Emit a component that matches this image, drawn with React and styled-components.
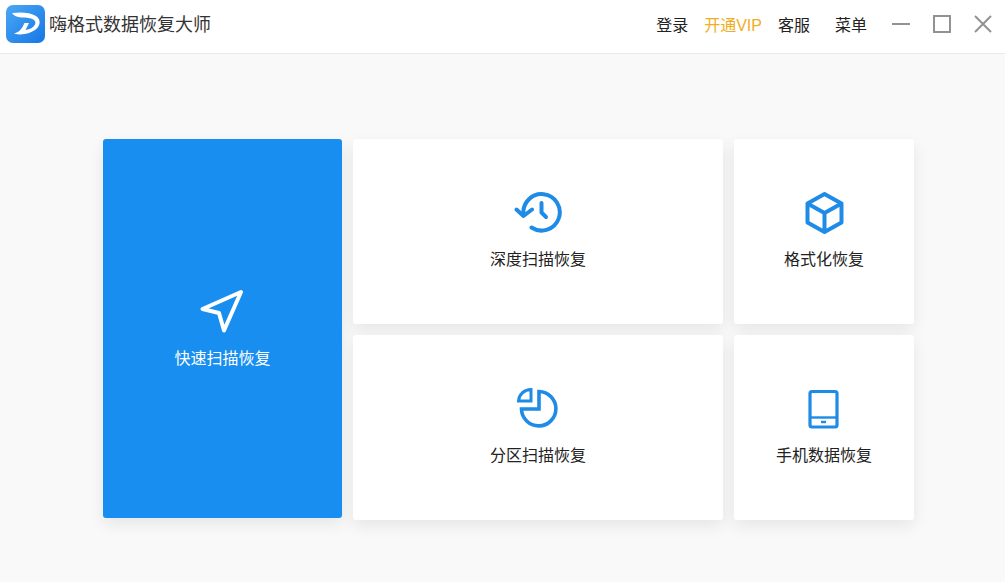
import React from 'react';
import styled, { createGlobalStyle } from 'styled-components';

const GlobalStyle = createGlobalStyle`
  * {
    box-sizing: border-box;
  }

  body {
    margin: 0;
    background-color: #f9f9f9;
    color: #222;
    font-family: 'Liberation Sans', 'Noto Sans CJK SC', sans-serif;
    font-size: 16px;
    line-height: 24px;
  }

  button {
    border: 0;
    background: none;
    padding: 0;
    color: inherit;
    font: inherit;
    cursor: pointer;
  }
`;

const Page = styled.div`
  display: flex;
  flex-direction: column;
  min-height: 100vh;
`;

const TitleBar = styled.header`
  display: flex;
  align-items: center;
  justify-content: space-between;
  padding: 5px 13px 10px 6px;
  background-color: #fff;
  border-bottom: 1px solid #e9e9e9;
`;

const Brand = styled.div`
  display: flex;
  align-items: center;
  gap: 4px;
`;

const BrandName = styled.h1`
  margin: 0;
  padding-top: 2px;
  color: #333;
  font-size: 18px;
  font-weight: 400;
  line-height: 24px;
`;

const Actions = styled.div`
  display: flex;
  align-items: center;
  gap: 25px;
`;

const Menu = styled.nav`
  display: flex;
  gap: 16px;
`;

const MenuLink = styled.a`
  padding-top: 4px;
  color: ${({ $vip }) => ($vip ? '#f0ae22' : '#222')};
  text-decoration: none;
`;

const WindowControls = styled.div`
  display: flex;
  gap: 23px;
`;

const WindowButton = styled.button`
  display: flex;
`;

const Main = styled.main`
  flex: 1;
  padding: 85px 91px 62px 103px;
`;

const CardGrid = styled.div`
  display: grid;
  grid-template-columns: 239fr 370fr 180fr;
  grid-auto-rows: minmax(185px, auto);
  gap: 11px;
`;

const Card = styled.button`
  display: flex;
  flex-direction: column;
  align-items: center;
  justify-content: center;
  gap: 12px;
  grid-row: ${({ $featured }) => ($featured ? 'span 2' : 'auto')};
  margin-bottom: ${({ $featured }) => ($featured ? '2px' : '0')};
  padding-bottom: ${({ $featured }) => ($featured ? '0' : '4px')};
  border-radius: 3px;
  background-color: ${({ $featured }) => ($featured ? '#188ef0' : '#fff')};
  box-shadow: 0 6px 16px rgba(0, 0, 0, 0.08);
  color: ${({ $featured }) => ($featured ? '#fff' : '#222')};

  svg {
    color: ${({ $featured }) => ($featured ? '#fff' : '#1e8be6')};
  }
`;

const CardIcon = ({ children }) => (
  <svg
    width="48"
    height="48"
    viewBox="0 0 48 48"
    fill="none"
    stroke="currentColor"
    strokeWidth="4"
    strokeLinejoin="round"
    aria-hidden="true"
  >
    {children}
  </svg>
);

const Logo = () => (
  <svg width="39" height="38" viewBox="0 0 39 38" aria-hidden="true">
    <defs>
      <linearGradient id="logoFill" x1="0" y1="0" x2="1" y2="1">
        <stop offset="0" stopColor="#4ba7f4" />
        <stop offset="1" stopColor="#1577e6" />
      </linearGradient>
    </defs>
    <rect width="39" height="38" rx="7" fill="url(#logoFill)" />
    <path
      d="M6 8C14 7 24 7 30 11C35.500 15 34.500 21 29 25C23.500 29 15 30.500 8 28.500C12 27.500 14.500 25.500 16.500 22L18.500 18H23L19.500 25C24 24.500 27.500 22.500 29 19.500C30.500 16 28 14 23.500 13.200C17 12 9.500 13.500 6 8Z"
      fill="#fff"
    />
  </svg>
);

const cards = [
  {
    label: '快速扫描恢复',
    featured: true,
    icon: <path d="M42 5L3.500 22L20 26L25 43.500Z" />,
  },
  {
    label: '深度扫描恢复',
    icon: (
      <g strokeLinecap="round">
        <path d="M9.500 26.500A18.200 18.200 0 1 1 17.500 39.500" />
        <path d="M2.500 21.500L9.500 28L18 21.500" />
        <path d="M27.500 15V24.500L32 29" />
      </g>
    ),
  },
  {
    label: '格式化恢复',
    icon: <path d="M24.500 6L41.500 15.500V34.500L24.500 44L7.500 34.500V15.500ZM7.500 15.500L24.500 25L41.500 15.500M24.500 25V44" />,
  },
  {
    label: '分区扫描恢复',
    icon: (
      <g strokeWidth="3.600" strokeLinejoin="miter">
        <path d="M25 7.500A17.200 17.200 0 1 1 7.500 25H25Z" />
        <path d="M17 5.500V17H4.500A12.500 12 0 0 1 17 5.500Z" strokeWidth="3" />
      </g>
    ),
  },
  {
    label: '手机数据恢复',
    icon: (
      <g strokeWidth="3.200">
        <rect x="10" y="7.500" width="27" height="35.500" rx="2" />
        <path d="M10 33.500H37" strokeWidth="2.400" />
        <path d="M21 38H26" strokeWidth="2.400" />
      </g>
    ),
  },
];

const App = () => {
  return (
    <Page>
      <GlobalStyle />
      <TitleBar>
        <Brand>
          <Logo />
          <BrandName>嗨格式数据恢复大师</BrandName>
        </Brand>
        <Actions>
          <Menu>
            <MenuLink href="#login">登录</MenuLink>
            <MenuLink href="#vip" $vip>开通VIP</MenuLink>
            <MenuLink href="#service">客服</MenuLink>
          </Menu>
          <MenuLink href="#menu">菜单</MenuLink>
          <WindowControls>
            <WindowButton type="button" aria-label="最小化">
              <svg width="18" height="18" fill="none" stroke="#929292" strokeWidth="2">
                <path d="M0 9H18" />
              </svg>
            </WindowButton>
            <WindowButton type="button" aria-label="最大化">
              <svg width="18" height="18" fill="none" stroke="#929292" strokeWidth="2">
                <rect x="1" y="1" width="16" height="16" />
              </svg>
            </WindowButton>
            <WindowButton type="button" aria-label="关闭">
              <svg width="18" height="18" fill="none" stroke="#929292" strokeWidth="2">
                <path d="M1 1L17 17M17 1L1 17" />
              </svg>
            </WindowButton>
          </WindowControls>
        </Actions>
      </TitleBar>
      <Main>
        <CardGrid>
          {cards.map(({ label, icon, featured }) => (
            <Card key={label} type="button" $featured={featured}>
              <CardIcon>{icon}</CardIcon>
              <span>{label}</span>
            </Card>
          ))}
        </CardGrid>
      </Main>
    </Page>
  );
};

export default App;
